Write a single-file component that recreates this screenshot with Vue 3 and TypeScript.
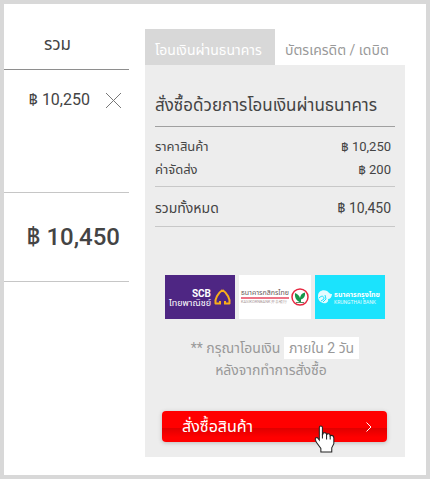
<script setup lang="ts">
import { ref } from 'vue'

interface Line {
  label: string
  amount: string
}

const tabs: string[] = ['โอนเงินผ่านธนาคาร', 'บัตรเครดิต / เดบิต']
const active = ref(0)
const removed = ref(false)

const lines: Line[] = [
  { label: 'ราคาสินค้า', amount: '฿ 10,250' },
  { label: 'ค่าจัดส่ง', amount: '฿ 200' },
]
const total: Line = { label: 'รวมทั้งหมด', amount: '฿ 10,450' }
</script>

<template>
  <main class="checkout">
    <table class="cart">
      <thead>
        <tr><th scope="col">รวม</th></tr>
      </thead>
      <tbody>
        <tr v-if="!removed" class="item">
          <td>
            <div class="item-line">
              <span>฿ 10,250</span>
              <button type="button" class="remove" aria-label="ลบ" @click="removed = true">
                <svg viewBox="0 0 15 15" width="15" height="15"><path d="M0 0L15 15M15 0L0 15" /></svg>
              </button>
            </div>
          </td>
        </tr>
        <tr class="sum"><td>{{ total.amount }}</td></tr>
      </tbody>
    </table>

    <section class="payment">
      <div class="tabs" role="tablist">
        <button
          v-for="(tab, i) in tabs"
          :key="tab"
          type="button"
          role="tab"
          class="tab"
          :class="{ active: active === i }"
          :aria-selected="active === i"
          @click="active = i"
        >{{ tab }}</button>
      </div>

      <div class="panel">
        <h2>สั่งซื้อด้วยการโอนเงินผ่านธนาคาร</h2>
        <dl class="lines">
          <div v-for="line in lines" :key="line.label" class="line">
            <dt>{{ line.label }}</dt>
            <dd>{{ line.amount }}</dd>
          </div>
        </dl>
        <dl class="lines grand">
          <div class="line">
            <dt>{{ total.label }}</dt>
            <dd>{{ total.amount }}</dd>
          </div>
        </dl>

        <div class="banks">
          <svg class="bank" viewBox="0 0 70 44" role="img" aria-label="SCB">
            <rect width="70" height="44" fill="#4e2683" />
            <text x="46" y="22" text-anchor="end" class="scb-en">SCB</text>
            <text x="46" y="31" text-anchor="end" class="scb-th">ไทยพาณิชย์</text>
            <path d="M57.500 15C53 18 49.500 24 50.500 28.500H55M57.500 15C62 18 65.500 24 64.500 28.500H60M55 26V29.500M60 26V29.500" fill="none" stroke="#f9ae1a" stroke-width="2" stroke-linejoin="round" />
          </svg>
          <svg class="bank" viewBox="0 0 72 44" role="img" aria-label="KASIKORNBANK">
            <rect width="72" height="44" fill="#fff" />
            <text x="2" y="20" class="kb-th">ธนาคารกสิกรไทย</text>
            <rect x="2" y="22" width="48" height="2" fill="#ed7385" />
            <text x="2" y="28" class="kb-en">KASIKORNBANK</text>
            <text x="32" y="28" class="kb-en">开泰银行</text>
            <circle cx="61" cy="22" r="8" fill="#fff" stroke="#e62740" stroke-width="1.500" />
            <path d="M60.500 27C57 25.500 55.500 22 56 18C59 19 60.500 21 61 23C61.500 20 63 18 66 17.500C66.500 21 65 23.500 62 24.500V27Z" fill="#16984b" />
            <path d="M57 27.500H65" stroke="#5b8b67" />
          </svg>
          <svg class="bank" viewBox="0 0 70 44" role="img" aria-label="KRUNGTHAI BANK">
            <rect width="70" height="44" fill="#1be3fd" />
            <path d="M3 21C3 16 8 14 12 16C14 17 14 19 17 19C17 22 15 24 13 24C14 27 11 29 8 28C5 27 3 25 3 21Z" fill="#e4fbff" />
            <path d="M4 23C7 20 9 21 9 24L6 26M10 20L11 24L8 27" fill="none" stroke="#1be3fd" />
            <text x="19" y="22" class="kt-th">ธนาคารกรุงไทย</text>
            <text x="19" y="29" class="kt-en">KRUNGTHAI BANK</text>
          </svg>
        </div>

        <p class="note">
          ** กรุณาโอนเงิน <mark>ภายใน 2 วัน</mark><br />หลังจากทำการสั่งซื้อ
        </p>

        <button type="button" class="order">
          <span>สั่งซื้อสินค้า</span>
          <svg class="chevron" viewBox="0 0 6 10" width="6" height="10"><path d="M.5 .5L5 5L.5 9.500" /></svg>
          <svg class="pointer" viewBox="0 0 20 27" width="21" height="28">
            <path d="M5 2.500Q5 1 6.500 1Q8 1 8 2.500V10L9 7.500Q12 7 12 9.500L13 8.500Q15.500 8 15.500 10.500L16.500 10Q19 10 19 12.500V18L17 22V26H6.500V22.500L2 16.500L1 13.500Q1 12 3 12L5 14.500Z" />
            <path d="M8 9V13M12 9V14M15.500 10V14" />
          </svg>
        </button>
      </div>
    </section>
  </main>
</template>

<style>
body {
  background: #fff;
}
</style>

<style scoped>
.checkout {
  box-sizing: border-box;
  display: flex;
  align-items: flex-start;
  gap: 16px;
  min-height: 100vh;
  padding: 0 21px 18px 0;
  border: 4px solid #d8d8d8;
  background: #fff;
  color: #444;
  font-family: Roboto, "Noto Sans Thai", "Noto Sans", sans-serif;
}

.cart {
  flex: 125 1 0;
  width: 0;
  border-collapse: separate;
  border-spacing: 0;
}

.cart th,
.cart td {
  padding: 0;
  white-space: nowrap;
}

.cart th {
  height: 40px;
  padding: 20px 18px 5px 0;
  border-bottom: 1px solid #8e8e8e;
  font-size: 17px;
  font-weight: 400;
  line-height: 40px;
}

.item td {
  height: 102px;
  padding: 20px 8px 0 0;
  border-bottom: 1px solid #c6c6c6;
  vertical-align: top;
}

.item-line {
  display: flex;
  align-items: center;
  justify-content: flex-end;
  gap: 16px;
  font-size: 16px;
  line-height: 20px;
}

.remove {
  display: flex;
  padding: 0;
  border: 0;
  background: none;
  cursor: pointer;
}

.remove path {
  fill: none;
  stroke: #777;
}

.sum td {
  height: 88px;
  padding: 2px 9px 0 0;
  box-sizing: border-box;
  height: 89px;
  border-bottom: 1px solid #c6c6c6;
  font-size: 24px;
  font-weight: 500;
  text-align: right;
}

.payment {
  flex: 260 1 0;
  min-width: 0;
  padding-top: 25px;
}

.tabs {
  display: grid;
  grid-template-columns: 1fr 1fr;
}

.tab {
  height: 36px;
  padding: 6px 0 0 10px;
  border: 0;
  background: transparent;
  color: #999;
  font: inherit;
  font-size: 14px;
  text-align: left;
  white-space: nowrap;
  cursor: pointer;
}

.tab.active {
  background: #d8d8d8;
  color: #fff;
}

.panel {
  padding: 24px 10px 15px;
  background: #ededed;
}

h2 {
  margin: 0;
  padding-bottom: 5px;
  border-bottom: 1px solid #a0a0a0;
  font-size: 17px;
  font-weight: 400;
  line-height: 32px;
  white-space: nowrap;
}

.lines {
  margin: 0;
  padding: 8px 4px 5px 0;
  border-bottom: 1px solid #c8c8c8;
  font-size: 13px;
  line-height: 23px;
}

.lines.grand {
  padding: 10px 4px 6px 0;
  font-size: 14px;
}

.line {
  display: flex;
  justify-content: space-between;
}

dd {
  margin: 0;
}

.banks {
  display: grid;
  grid-template-columns: 70fr 72fr 70fr;
  gap: 4px;
  padding: 48px 10px 0;
}

.bank {
  display: block;
  width: 100%;
}

.scb-en {
  fill: #fff;
  font-size: 10px;
  font-weight: 700;
}

.scb-th {
  fill: #fff;
  font-size: 9px;
}

.kb-th {
  fill: #655;
  font-size: 7px;
}

.kb-en {
  fill: #a99;
  font-size: 4px;
}

.kt-th {
  fill: #fff;
  font-size: 7px;
  font-weight: 700;
}

.kt-en {
  fill: #e4fbff;
  font-size: 5px;
}

.note {
  margin: 0;
  padding: 18px 8px 0 0;
  color: #999;
  font-size: 14px;
  line-height: 22px;
  text-align: center;
}

.note mark {
  display: inline-block;
  margin-right: -8px;
  padding: 0 5px;
  background: #fff;
  color: inherit;
}

.order {
  position: relative;
  display: flex;
  align-items: center;
  justify-content: space-between;
  width: calc(100% - 15px);
  height: 31px;
  margin: 30px 8px 0 7px;
  padding: 0 15px 0 20px;
  border: 0;
  border-radius: 4px;
  background: linear-gradient(#f00 0 54%, #e00000 56%, #f00 85%);
  box-shadow: 0 1px 4px #bbb;
  color: #fff;
  font: inherit;
  font-size: 16px;
  cursor: pointer;
}

.chevron path {
  fill: none;
  stroke: #fff;
}

.pointer {
  position: absolute;
  top: 14px;
  left: 152px;
  fill: #fff;
  stroke: #222;
}
</style>
